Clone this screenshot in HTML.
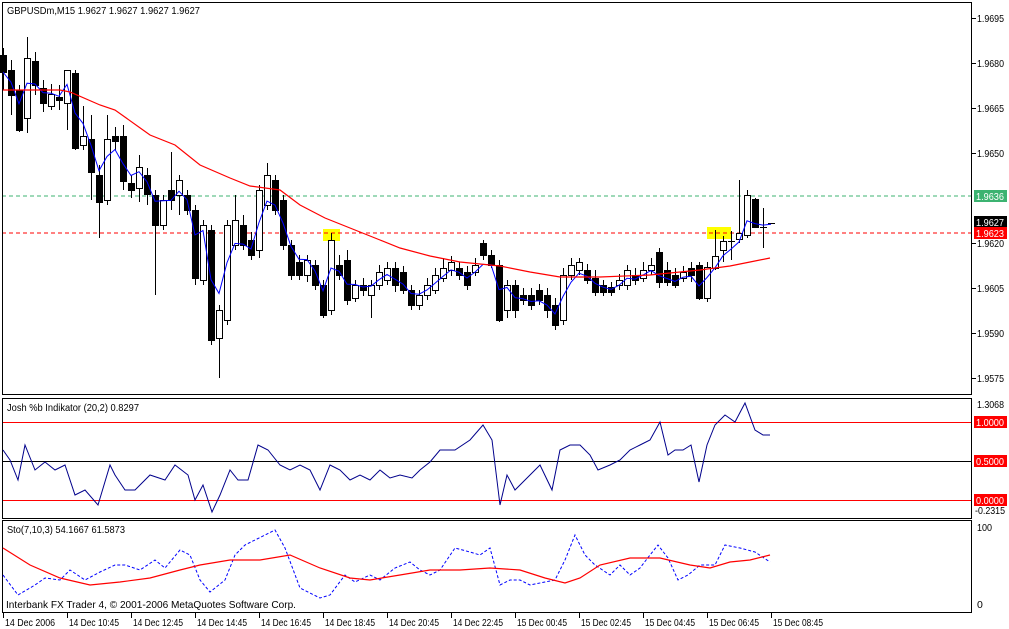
<!DOCTYPE html>
<html><head><meta charset="utf-8"><style>
html,body{margin:0;padding:0;background:#fff;width:1009px;height:629px;overflow:hidden}
svg{display:block}
text{font-family:"Liberation Sans",sans-serif;font-size:10.5px;fill:#000}
</style></head><body>
<svg id="s" width="1009" height="629" xmlns="http://www.w3.org/2000/svg" shape-rendering="crispEdges">
<rect x="0" y="0" width="1009" height="629" fill="#fff"/>
</svg>
<script>
var S=document.getElementById('s'),NS='http://www.w3.org/2000/svg';
function el(t,a,txt){var e=document.createElementNS(NS,t);for(var k in a)e.setAttribute(k,a[k]);if(txt!=null)e.textContent=txt;S.appendChild(e);return e;}
function tx(x,y,s,w,st){var a={x:x,y:y};if(w){a.textLength=w;a.lengthAdjust='spacingAndGlyphs';}if(st)a.style=st;return el('text',a,s);}
function line(x1,y1,x2,y2,c,extra){var a={x1:x1,y1:y1,x2:x2,y2:y2,stroke:c||'#000','stroke-width':1};for(var k in extra)a[k]=extra[k];return el('line',a);}
function poly(pts,c,extra){var a={points:pts.map(function(p){return p[0]+','+p[1]}).join(' '),fill:'none',stroke:c,'stroke-width':1,'shape-rendering':'auto'};for(var k in extra)a[k]=extra[k];return el('polyline',a);}
el('rect',{x:323,y:229,width:17,height:12,fill:'#ffff00'});
el('rect',{x:707,y:227,width:24,height:12,fill:'#ffff00'});
line(2,196,972,196,'#3cb371',{'stroke-dasharray':'4,3'});
line(2,233,972,233,'#ff0000',{'stroke-dasharray':'4,3'});
var C=[[55,72,'b',48,90],[70,95,'b',60,115],[90,130,'b',85,132],[58,118,'w',37,133],[61,85,'b',52,95],[88,103,'b',80,112],[94,106,'w',84,110],[97,100,'b',85,110],[70,103,'w',70,130],[73,148,'b',70,150],
[136,145,'w',106,150],[139,172,'b',115,200],[175,202,'b',165,238],[139,200,'w',115,205],[136,141,'b',127,150],[136,181,'b',125,190],[183,190,'b',175,198],[167,188,'w',155,202],[175,194,'b',168,205],[195,225,'b',190,295],
[200,225,'w',195,230],[190,200,'b',152,210],[180,195,'w',175,215],[195,210,'b',190,215],[210,278,'b',205,285],[225,280,'w',220,285],[230,340,'b',225,345],[310,338,'w',305,378],[225,320,'w',220,325],[220,245,'w',195,250],
[225,245,'b',215,250],[240,255,'b',232,260],[190,250,'w',185,258],[175,205,'w',163,210],[180,210,'b',175,215],[200,245,'b',195,250],[245,275,'b',240,280],[262,275,'b',255,280],[260,275,'w',255,282],[265,285,'b',260,290],
[285,315,'b',280,318],[240,310,'w',233,315],[265,275,'b',255,280],[260,300,'b',250,305],[285,298,'w',280,302],[285,290,'b',278,296],[285,295,'w',280,318],[272,285,'w',265,290],[268,280,'w',262,285],[268,285,'b',262,292],
[272,290,'b',266,294],[290,305,'b',285,310],[295,305,'w',290,310],[285,295,'w',278,300],[275,290,'w',268,294],[268,278,'w',258,282],[262,270,'w',256,276],[268,275,'b',262,280],[272,285,'b',266,290],[265,272,'w',258,276],
[243,255,'b',240,260],[255,265,'b',250,268],[265,320,'b',260,322],[285,310,'w',280,318],[285,310,'b',280,318],[295,300,'b',288,305],[295,305,'b',288,310],[290,300,'b',284,305],[295,310,'b',288,318],[305,325,'b',298,330],
[275,320,'w',268,325],[265,275,'w',258,280],[262,270,'w',258,275],[270,280,'b',264,284],[278,292,'b',270,296],[285,292,'b',280,296],[287,292,'b',282,296],[280,285,'w',274,290],[270,285,'w',265,290],[275,280,'b',268,285],
[270,278,'w',262,282],[265,270,'w',258,275],[252,282,'b',248,288],[270,282,'b',262,286],[275,285,'b',268,288],[272,278,'w',266,282],[268,275,'b',262,282],[265,298,'b',262,300],[267,298,'w',262,302],[256,268,'w',230,270],
[241,250,'w',236,262],[241,241,'w',231,260],[233,239,'w',180,243],[195,235,'w',190,238],[199,227,'b',198,228],[227,227,'w',208,248],[223,223,'w',223,223]];
var mids=[];
C.forEach(function(c,i){var x=3+8*i;var t=c[0],b=c[1];
 line(x+0.5,c[3],x+0.5,c[4],'#000');
 if(b-t<1){line(x-3,t+0.5,x+4,t+0.5,'#000');}
 else el('rect',{x:x-2.5,y:t+0.5,width:6,height:b-t,fill:c[2]=='b'?'#000':'#fff',stroke:'#000','stroke-width':1});
 mids.push(c[2]=='b'?b:t);});
var bl=[],e=mids[0];mids.forEach(function(m,i){e=e+(m-e)*0.45;bl.push([3+8*i,e.toFixed(1)]);});
poly(bl,'#0000ff');
poly([[3,90],[60,90],[70,92],[100,105],[115,110],[150,135],[175,145],[200,165],[230,178],[250,186],[280,190],[300,205],[325,218],[350,228],[380,240],[400,248],[430,256],[460,262],[500,266],[530,272],[560,277],[600,277],[650,275],[700,270],[730,266],[750,262],[770,258]],'#ff0000',{'stroke-width':1.2});
el('rect',{x:2.5,y:2.5,width:969,height:392,fill:'none',stroke:'#000'});
el('rect',{x:2.5,y:398.5,width:969,height:120,fill:'none',stroke:'#000'});
el('rect',{x:2.5,y:520.5,width:969,height:92,fill:'none',stroke:'#000'});
[['1.9695',18],['1.9680',63],['1.9665',108],['1.9650',153],['1.9620',243],['1.9605',288],['1.9590',333],['1.9575',378]].forEach(function(p){line(972,p[1]+0.5,976,p[1]+0.5,'#000');tx(977,p[1]+4,p[0],27);});
function tag(y,bg,txt){el('rect',{x:974,y:y-6,width:33,height:12,fill:bg});tx(976,y+4,txt,28,'fill:#fff');}
tag(196,'#3cb371','1.9636');tag(222,'#000','1.9627');tag(233,'#ff0000','1.9623');
tx(7,14,'GBPUSDm,M15  1.9627 1.9627 1.9627 1.9627',193);
[422,461,500].forEach(function(y){line(3,y+0.5,971,y+0.5,y==461?'#000':'#ff0000');});
tx(977,408,'1.3068',27);
tag(422,'#ff0000','1.0000');tag(461,'#ff0000','0.5000');tag(500,'#ff0000','0.0000');
tx(975,514,'-0.2315',30);
poly([[3,450],[10,460],[18,480],[25,445],[35,470],[45,462],[55,470],[65,465],[75,495],[85,490],[98,505],[110,465],[115,475],[125,490],[135,490],[150,475],[165,480],[175,465],[188,475],[195,500],[203,485],[212,512],[220,495],[230,470],[238,480],[248,480],[258,445],[268,450],[280,465],[290,470],[300,465],[310,470],[320,490],[330,465],[340,470],[350,480],[360,475],[370,480],[380,470],[390,478],[400,475],[412,478],[420,470],[430,462],[440,450],[455,450],[470,440],[483,425],[492,440],[500,505],[507,475],[515,490],[525,480],[540,465],[552,490],[560,450],[570,445],[580,445],[590,455],[598,470],[610,465],[620,460],[630,450],[640,445],[650,440],[660,422],[668,455],[675,450],[683,450],[691,445],[699,482],[707,445],[715,425],[725,415],[735,422],[745,403],[755,430],[763,435],[770,435]],'#00008b');
tx(7,411,'Josh %b Indikator (20,2) 0.8297',132);
poly([[3,575],[18,595],[35,585],[45,578],[60,580],[70,570],[85,580],[100,572],[115,565],[125,565],[140,570],[155,560],[165,568],[180,550],[190,555],[200,580],[210,592],[225,580],[235,555],[245,545],[265,535],[275,530],[285,548],[300,588],[320,598],[330,595],[345,575],[355,582],[370,575],[380,580],[395,568],[410,562],[420,570],[430,575],[440,570],[455,548],[470,552],[480,555],[490,548],[500,585],[510,580],[520,580],[530,585],[545,582],[555,580],[565,560],[575,535],[585,555],[595,565],[610,575],[620,565],[630,575],[640,568],[650,555],[658,545],[668,558],[678,580],[688,575],[700,565],[715,565],[725,545],[740,548],[755,552],[770,562]],'#0000ff',{'stroke-dasharray':'3,2'});
poly([[3,548],[30,565],[60,578],[90,585],[120,582],[150,578],[180,570],[200,565],[230,560],[260,560],[290,555],[320,568],[350,578],[370,580],[400,575],[430,570],[460,570],[490,568],[520,570],[545,578],[565,583],[580,578],[600,565],[630,558],[660,558],[690,565],[710,568],[730,562],[750,560],[770,555]],'#ff0000',{'stroke-width':1.2});
tx(7,533,'Sto(7,10,3) 54.1667 61.5873',118);
tx(6,608,'Interbank FX Trader 4, © 2001-2006 MetaQuotes Software Corp.',290);
tx(977,531,'100',15);tx(977,608,'0');
var T=['14 Dec 2006','14 Dec 10:45','14 Dec 12:45','14 Dec 14:45','14 Dec 16:45','14 Dec 18:45','14 Dec 20:45','14 Dec 22:45','15 Dec 00:45','15 Dec 02:45','15 Dec 04:45','15 Dec 06:45','15 Dec 08:45'];
T.forEach(function(t,i){var x=3+64*i;line(x+0.5,613,x+0.5,618,'#000');tx(x+2,626,t,i==0?50:50);});
</script>
</body></html>
